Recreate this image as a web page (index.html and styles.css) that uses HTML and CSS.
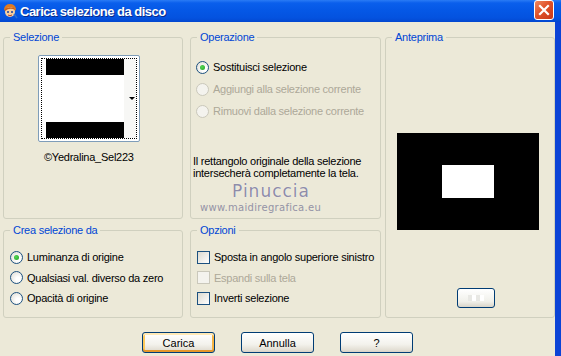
FILE: index.html
```html
<!DOCTYPE html>
<html lang="it">
<head>
  <meta charset="UTF-8" />
  <title>Carica selezione da disco</title>
  <link rel="stylesheet" href="styles.css">
</head>
<body>
  <div class="window">
    <div class="titlebar">
      <svg class="app-icon" width="16" height="16" viewBox="0 0 16 16">
        <path d="M2 6 Q3 1 8 1 Q13 1 14 6 L13 8 L3 8 Z" fill="#e07a20"/>
        <circle cx="8" cy="9" r="5" fill="#f6cfa0"/>
        <path d="M3 6 Q6 3 12 5 L13 7 Q8 4 3 8 Z" fill="#c8601a"/>
        <circle cx="6" cy="9" r="1" fill="#1b3f9a"/>
        <circle cx="10" cy="9" r="1" fill="#1b3f9a"/>
        <path d="M6 12 Q8 13.5 10 12" stroke="#b0402a" stroke-width="1" fill="none"/>
        <path d="M12 11 L15 15" stroke="#2f6fd0" stroke-width="1.5"/>
      </svg>
      <span class="title">Carica selezione da disco</span>
      <button class="close" type="button">
        <svg width="12" height="12" viewBox="0 0 12 12">
          <path d="M2 2 L10 10 M10 2 L2 10" stroke="#fff" stroke-width="2.2" stroke-linecap="square"/>
        </svg>
      </button>
    </div>

    <div class="client">
      <div class="groups">
        <section class="group sel">
          <h2 class="legend">Selezione</h2>
          <div class="picker">
            <div class="picker-focus">
              <div class="thumb">
                <div class="bar"></div>
                <div class="gap"></div>
                <div class="bar"></div>
              </div>
              <div class="picker-drop"><span class="arrow"></span></div>
            </div>
          </div>
          <p class="sel-name">©Yedralina_Sel223</p>
        </section>

        <section class="group op">
          <h2 class="legend">Operazione</h2>
          <div class="rows op-rows">
            <label class="row"><span class="radio checked"></span>Sostituisci selezione</label>
            <label class="row disabled"><span class="radio"></span>Aggiungi alla selezione corrente</label>
            <label class="row disabled"><span class="radio"></span>Rimuovi dalla selezione corrente</label>
          </div>
          <p class="note">Il rettangolo originale della selezione<br>intersecherà completamente la tela.</p>
          <div class="watermark">
            <span class="wm-name">Pinuccia</span>
            <span class="wm-site">www.maidiregrafica.eu</span>
          </div>
        </section>

        <section class="group preview">
          <h2 class="legend">Anteprima</h2>
          <div class="canvas"><div class="canvas-sel"></div></div>
          <button class="small-btn" type="button"><span class="dots"></span></button>
        </section>

        <section class="group create">
          <h2 class="legend">Crea selezione da</h2>
          <div class="rows create-rows">
            <label class="row"><span class="radio checked"></span>Luminanza di origine</label>
            <label class="row"><span class="radio"></span>Qualsiasi val. diverso da zero</label>
            <label class="row"><span class="radio"></span>Opacità di origine</label>
          </div>
        </section>

        <section class="group options">
          <h2 class="legend">Opzioni</h2>
          <div class="rows create-rows">
            <label class="row"><span class="check"></span>Sposta in angolo superiore sinistro</label>
            <label class="row disabled"><span class="check"></span>Espandi sulla tela</label>
            <label class="row"><span class="check"></span>Inverti selezione</label>
          </div>
        </section>
      </div>

      <div class="buttons">
        <button class="btn default" type="button">Carica</button>
        <button class="btn" type="button">Annulla</button>
        <button class="btn" type="button">?</button>
      </div>
    </div>
  </div>
</body>
</html>
```

FILE: styles.css
```css
* {
  box-sizing: border-box;
}
body {
  margin: 0;
  font-family: 'Liberation Sans', Arial, sans-serif;
  font-size: 11px;
  letter-spacing: -0.25px;
  color: #000;
  background: #ece9d8;
}
.window {
  width: 561px;
  height: 356px;
  display: flex;
  flex-direction: column;
  overflow: hidden;
}

/* title bar */
.titlebar {
  height: 22px;
  flex: none;
  display: flex;
  align-items: center;
  padding-left: 2px;
  background: linear-gradient(to bottom, #2a7bf5 0, #0a5fec 3px, #0558e6 10px, #0452df 18px, #0347cf 22px);
}
.app-icon {
  flex: none;
  margin-right: 2px;
}
.title {
  flex: 1;
  color: #fff;
  font-family: 'Liberation Sans', Arial, sans-serif;
  font-weight: bold;
  font-size: 13px;
  letter-spacing: -0.5px;
  text-shadow: 1px 1px 0 #0a2a8a;
}
.close {
  width: 20px;
  height: 20px;
  margin: -2px 7px 0 0;
  padding: 0;
  border: 1px solid #fff;
  border-radius: 3px;
  background: linear-gradient(135deg, #f08a62, #e0522a 45%, #c8381a);
  display: flex;
  align-items: center;
  justify-content: center;
}

/* client area */
.client {
  flex: 1;
  border-right: 6px solid #0b43d6;
  padding: 15px 0 0 3px;
}
.groups {
  display: grid;
  grid-template-columns: 180px 191px 167px;
  grid-template-rows: 182px 88px;
  column-gap: 7px;
  row-gap: 11px;
}
.groups .op { grid-column: 2; grid-row: 1; }
.groups .preview { grid-column: 3; grid-row: 1 / 3; margin-left: -3px; }
.groups .create { grid-column: 1; grid-row: 2; }
.groups .options { grid-column: 2; grid-row: 2; }

.group {
  border: 1px solid #d0d0bf;
  border-radius: 3px;
  margin: 0;
}
.legend {
  margin: -7px 0 0 6px;
  padding: 0 3px;
  width: fit-content;
  font-size: 11px;
  font-weight: normal;
  line-height: 13px;
  color: #0046d5;
  background: #ece9d8;
}

/* selezione */
.picker {
  width: 102px;
  height: 87px;
  margin: 11px 0 0 34px;
  padding: 2px;
  border: 1px solid #7f9db9;
  border-radius: 2px;
  background: #fff;
}
.picker-focus {
  height: 100%;
  border: 1px dotted #000;
  display: flex;
  padding: 0 0 0 4px;
}
.thumb {
  width: 78px;
  display: flex;
  flex-direction: column;
}
.thumb .bar {
  height: 16px;
  background: #000;
}
.thumb .gap {
  height: 47px;
}
.picker-drop {
  flex: 1;
  background: #f7f7f5;
  position: relative;
}
.arrow {
  position: absolute;
  right: 1px;
  top: 38px;
  border-left: 3px solid transparent;
  border-right: 3px solid transparent;
  border-top: 3px solid #000;
}
.sel-name {
  margin: 9px 0 0 40px;
  line-height: 13px;
}

/* radio / check rows */
.rows {
  display: flex;
  flex-direction: column;
  white-space: nowrap;
}
.op-rows {
  margin: 12px 0 0 5px;
}
.op-rows .row {
  height: 22px;
}
.create-rows {
  margin: 10px 0 0 6px;
}
.create-rows .row {
  height: 20.5px;
}
.row {
  display: flex;
  align-items: center;
  gap: 4px;
}
.row.disabled {
  color: #aca899;
}
.radio {
  width: 13px;
  height: 13px;
  flex: none;
  border: 1px solid #1c5180;
  border-radius: 50%;
  background: radial-gradient(circle at 65% 65%, #fff 20%, #dcdad0 100%);
  display: flex;
  align-items: center;
  justify-content: center;
}
.radio.checked::after {
  content: "";
  width: 5px;
  height: 5px;
  border-radius: 50%;
  background: radial-gradient(circle at 40% 40%, #55d655, #21a121);
}
.disabled .radio {
  border-color: #cac8bb;
  background: #f4f3ee;
}
.check {
  width: 13px;
  height: 13px;
  flex: none;
  border: 1px solid #1c5180;
  background: linear-gradient(135deg, #dcdad0, #fff);
}
.disabled .check {
  border-color: #cac8bb;
  background: #f4f3ee;
}

.note {
  margin: 33px 0 0 2px;
  line-height: 12px;
  white-space: nowrap;
}
.watermark {
  display: flex;
  flex-direction: column;
  margin: 2px 0 0 9px;
  color: #8e8ca8;
}
.wm-name {
  margin-left: 32px;
  font-family: 'DejaVu Sans', sans-serif;
  font-size: 17px;
  line-height: 20px;
  letter-spacing: 1px;
  text-shadow: 0 0 1px #fff;
}
.wm-site {
  font-family: 'DejaVu Sans', sans-serif;
  font-size: 10px;
  line-height: 14px;
  letter-spacing: 0.3px;
  color: #9493a6;
}

/* anteprima */
.canvas {
  width: 142px;
  height: 97px;
  margin: 89px 0 0 11px;
  background: #000;
  display: flex;
  align-items: center;
  justify-content: center;
}
.canvas-sel {
  width: 52px;
  height: 33px;
  background: #fff;
}
.small-btn {
  display: block;
  width: 38px;
  height: 20px;
  margin: 58px 0 0 71px;
  padding: 0;
  border: 1px solid #003c74;
  border-radius: 3px;
  background: linear-gradient(to bottom, #fff, #f0f0ea 70%, #d8d4c8);
}
.small-btn .dots {
  display: block;
  width: 16px;
  height: 6px;
  margin: 0 auto;
  background: repeating-linear-gradient(90deg, #e8e8e4 0 4px, #fff 4px 8px);
}

/* dialog buttons */
.buttons {
  display: flex;
  justify-content: center;
  gap: 26px;
  margin-top: 14px;
  padding-right: 3px;
}
.btn {
  width: 73px;
  height: 21px;
  padding: 0;
  font-family: 'Liberation Sans', Arial, sans-serif;
  font-size: 11px;
  color: #000;
  border: 1px solid #003c74;
  border-radius: 3px;
  background: linear-gradient(to bottom, #fff, #f3f2ec 60%, #e2ded3 90%, #d6d0c5);
}
.btn.default {
  box-shadow: inset 0 2px 0 #ffe9b6, inset 0 -2px 0 #e5972b, inset 2px 0 0 #fbc95c, inset -2px 0 0 #f5b443;
}
```
